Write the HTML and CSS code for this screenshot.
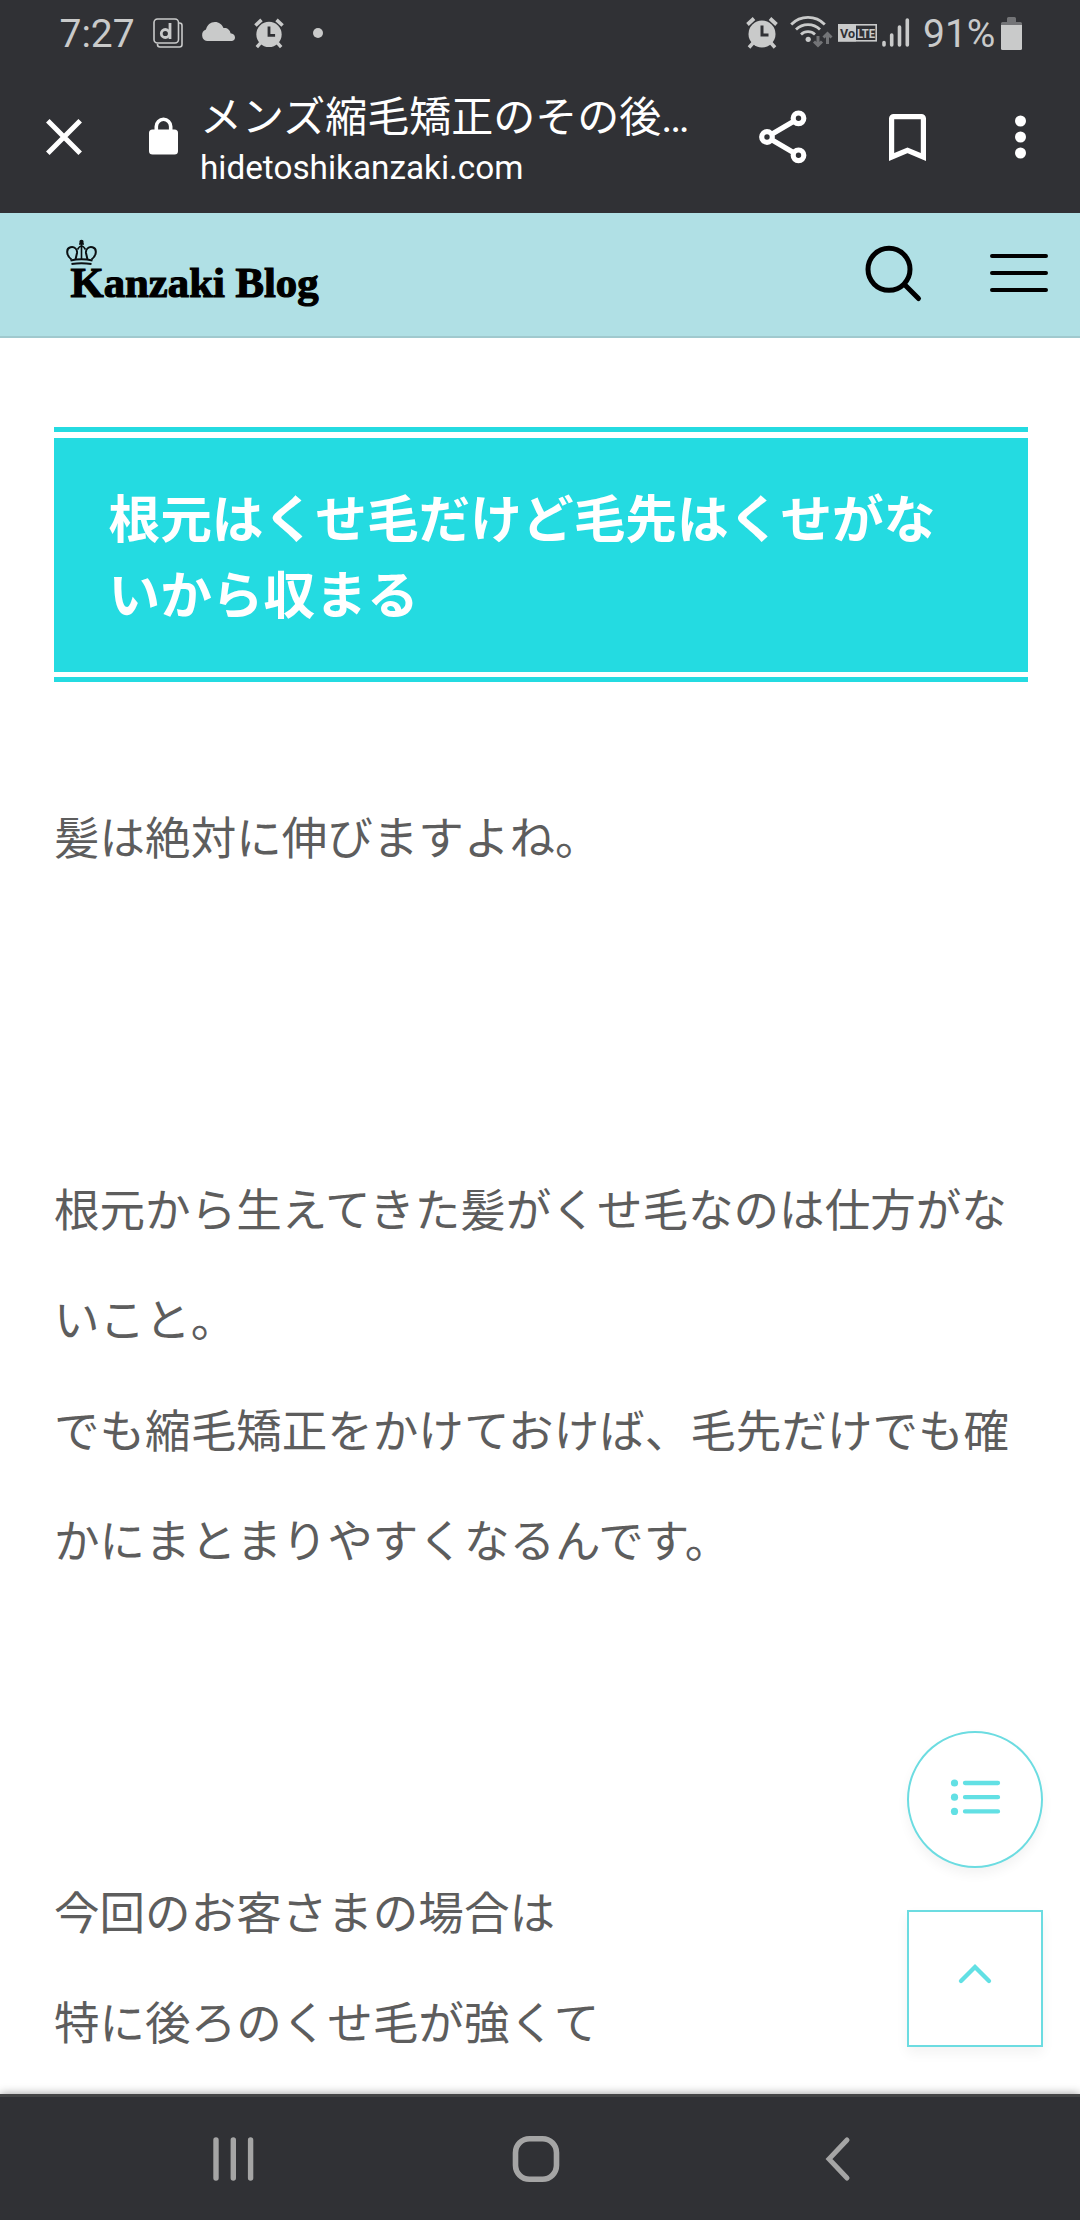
FILE: index.html
```html
<!DOCTYPE html>
<html lang="ja">
<head>
  <meta charset="UTF-8">
  <meta name="viewport" content="width=device-width, initial-scale=1.0">
  <title>Kanzaki Blog</title>
  <link rel="stylesheet" href="styles.css">
</head>
<body>
  <div class="screen">
    <div class="status-bar">
      <div class="status-left">
        <span class="status-text">7:27</span>
        <svg class="icon-app" width="30" height="30" viewBox="0 0 30 30" fill="none" stroke="#c9caca" stroke-width="1.6">
          <rect x="1" y="1" width="24.5" height="24" rx="3.5"/>
          <path d="M26 5h.5a2.500 2.500 0 0 1 2.500 2.500v19a2.500 2.500 0 0 1-2.500 2.500H7a2.500 2.500 0 0 1-2.500-2.500V26"/>
          <circle cx="12.300" cy="15.500" r="4" stroke-width="2.800"/>
          <path d="M17 5v16" stroke-width="2.800"/>
        </svg>
        <svg class="icon-cloud" width="34" height="19" viewBox="0 0 34 19" fill="#c9caca">
          <path d="M6 19a6 6 0 0 1-1-11.500C6 3 9.500 0 14 0c4 0 7 2.500 8.500 6 3.500-.5 6.500 1.500 7 5.200 2.500.2 4.500 1.800 4.500 4.300 0 2-1.500 3.500-3.500 3.500z"/>
        </svg>
        <svg class="icon-alarm-left" width="30" height="31" viewBox="0 0 32 32">
          <use href="#alarm"/>
        </svg>
        <span class="status-dot"></span>
      </div>
      <div class="status-right">
        <svg width="32" height="32" viewBox="0 0 32 32">
          <g id="alarm" fill="none" stroke="#c9caca" stroke-linecap="butt">
            <circle cx="16" cy="17" r="13.500" fill="#c9caca" stroke="none"/>
            <path d="M1.500 7.500L8 1.500M30.500 7.500L24 1.500" stroke-width="3.800"/>
            <path d="M7 26l-4 4.500M25 26l4 4.500" stroke-width="3.500"/>
            <path d="M16 8.500v9.500h6.500" stroke="#303135" stroke-width="3"/>
          </g>
        </svg>
        <svg class="icon-wifi" width="43" height="33" viewBox="0 0 43 33" fill="none" stroke="#c9caca" stroke-width="2.800">
          <path d="M1.200 9.500a23.500 23.500 0 0 1 33.600 0M6 14.500a17 17 0 0 1 24 0M11 19.500a10 10 0 0 1 14 0"/>
          <circle cx="18.200" cy="24.300" r="2.600" fill="#c9caca" stroke="none"/>
          <path d="M28 21v9M24 26.500l4 4 4-4M37.500 29V19M33.500 22.500l4-4 4 4" stroke="#737477" stroke-width="3"/>
        </svg>
        <svg class="icon-volte" width="39" height="18" viewBox="0 0 39 18">
          <rect x=".8" y=".8" width="37.400" height="16" fill="none" stroke="#c9caca" stroke-width="1.600"/>
          <rect width="18" height="17.500" fill="#c9caca"/>
          <text x="2" y="13.500" class="volte" fill="#303135" textLength="15" lengthAdjust="spacingAndGlyphs">Vo</text>
          <text x="19" y="13.500" class="volte" fill="#c9caca" textLength="18" lengthAdjust="spacingAndGlyphs">LTE</text>
        </svg>
        <svg class="icon-signal" width="28" height="31" viewBox="0 0 28 31" stroke="#c9caca" stroke-width="3.600" stroke-linecap="round">
          <path d="M2 25.500V28M9.700 18v10M17.500 10v18M25.300 3v25"/>
        </svg>
        <span class="status-text percent">91%</span>
        <svg class="icon-battery" width="21" height="33" viewBox="0 0 21 33">
          <path d="M6 5V1.500A1.500 1.500 0 0 1 7.500 0h6A1.500 1.500 0 0 1 15 1.500V5h4.500A1.500 1.500 0 0 1 21 6.500V8H0V6.500A1.500 1.500 0 0 1 1.500 5z" fill="#737477"/>
          <path d="M0 8h21v23.500a1.500 1.500 0 0 1-1.500 1.500h-18A1.500 1.500 0 0 1 0 31.500z" fill="#c9caca"/>
        </svg>
      </div>
    </div>

    <div class="tab-bar">
      <svg class="icon-close" width="36" height="36" viewBox="0 0 36 36" stroke="#fff" stroke-width="5">
        <path d="M1.800 1.800l32.400 32.400M34.200 1.800L1.800 34.200"/>
      </svg>
      <svg class="icon-lock" width="29" height="38" viewBox="0 0 29 38">
        <path d="M7.300 15V9.500a7.200 7.200 0 0 1 14.400 0V15" fill="none" stroke="#fff" stroke-width="3.600"/>
        <rect y="12.500" width="29" height="25" rx="3.500" fill="#fff"/>
      </svg>
      <div class="tab-info">
        <div class="tab-title">メンズ縮毛矯正のその後<span class="dots">…</span></div>
        <div class="tab-url">hidetoshikanzaki.com</div>
      </div>
      <svg class="icon-share" width="48" height="54" viewBox="0 0 48 54" fill="none" stroke="#fff" stroke-width="5.200">
        <path d="M8 27L39.500 8.500M8 27l31.500 18.500"/>
        <g fill="#303135">
          <circle cx="8" cy="27" r="5.300"/>
          <circle cx="39.500" cy="8.300" r="5.300"/>
          <circle cx="39.500" cy="45.300" r="5.300"/>
        </g>
      </svg>
      <svg class="icon-bookmark" width="37" height="47" viewBox="0 0 37 47" fill="none" stroke="#fff" stroke-width="5.200">
        <path d="M2.600 43V4.600a2 2 0 0 1 2-2h27.800a2 2 0 0 1 2 2V43L18.500 36.300z"/>
      </svg>
      <svg class="icon-more" width="11" height="44" viewBox="0 0 11 44" fill="#fff">
        <circle cx="5.500" cy="6" r="5.500"/>
        <circle cx="5.500" cy="22" r="5.500"/>
        <circle cx="5.500" cy="38" r="5.500"/>
      </svg>
    </div>

    <header class="site-header">
      <svg class="logo" width="260" height="76" viewBox="0 0 260 76">
        <g fill="none" stroke="#0b1012" stroke-width="2">
          <path d="M6.500 19.500C1.500 16 .5 8.500 5.500 7.300c4-1 7 2 6.500 5.700l-1.500 6.500M26.500 19.500c5-3.500 6-11 1-12.200-4-1-7 2-6.500 5.700l1.500 6.500"/>
          <path d="M16.500 1v18.500M12.500 9.500q2-3.500 4-3.500t4 3.500M14 4h5" stroke-width="1.600"/>
          <path d="M5.500 20.500q11-2.500 22 0M6.500 24q10-1.500 20 0"/>
          <circle cx="16.500" cy="2" r="1.200" fill="#0b1012"/>
        </g>
        <text class="logo-text" x="5.500" y="57" textLength="248" lengthAdjust="spacingAndGlyphs">Kanzaki Blog</text>
      </svg>
      <svg class="icon-search" width="56" height="58" viewBox="0 0 56 58" fill="none" stroke="#000" stroke-width="5" stroke-linecap="round">
        <circle cx="24" cy="24.300" r="21"/>
        <path d="M39.500 39.500l14 14"/>
      </svg>
      <svg class="icon-menu" width="58" height="40" viewBox="0 0 58 40" stroke="#000" stroke-width="4" stroke-linecap="round">
        <path d="M2 3h54M2 20h54M2 37h54"/>
      </svg>
    </header>

    <main class="article">
      <h2 class="heading"><span>根元はくせ毛だけど毛先はくせがないから収まる</span></h2>
      <p>髪は絶対に伸びますよね。</p>
      <p>根元から生えてきた髪がくせ毛なのは仕方がないこと。<br>でも縮毛矯正をかけておけば、毛先だけでも確かにまとまりやすくなるんです。</p>
      <p>今回のお客さまの場合は<br>特に後ろのくせ毛が強くて</p>
    </main>

    <div class="float-buttons">
      <a class="float-btn round">
        <svg width="50" height="36" viewBox="0 0 50 36" stroke="#62e0e4" stroke-width="4.300" stroke-linecap="round">
          <path d="M15 4h33M15 18.200h33M15 32.400h33"/>
          <g fill="#62e0e4" stroke="none">
            <circle cx="4.500" cy="4" r="3.600"/>
            <circle cx="4.500" cy="18.200" r="3.600"/>
            <circle cx="4.500" cy="32.400" r="3.600"/>
          </g>
        </svg>
      </a>
      <a class="float-btn">
        <svg class="icon-up" width="34" height="20" viewBox="0 0 34 20" fill="none" stroke="#62e0e4" stroke-width="4.300" stroke-linecap="round">
          <path d="M3 17L17 3l14 14"/>
        </svg>
      </a>
    </div>

    <div class="nav-bar">
      <svg class="icon-recents" width="41" height="44" viewBox="0 0 41 44" stroke="#a5a5a5" stroke-width="5.400" stroke-linecap="round">
        <path d="M3 3v38M20.300 3v38M37.600 3v38"/>
      </svg>
      <svg class="icon-home" width="48" height="48" viewBox="0 0 48 48" fill="none" stroke="#a5a5a5" stroke-width="5.600">
        <rect x="3.500" y="3.700" width="41" height="40.600" rx="14"/>
      </svg>
      <svg class="icon-back" width="26" height="44" viewBox="0 0 26 44" fill="none" stroke="#a5a5a5" stroke-width="5" stroke-linecap="round">
        <path d="M22 3L4 22l18 19"/>
      </svg>
    </div>
  </div>
</body>
</html>
```

FILE: styles.css
```css
*{
  margin: 0;
  padding: 0;
  box-sizing: border-box;
}

body{
  background-color: #fff;
  font-family: Roboto, "Noto Sans CJK JP", sans-serif;
}

svg{
  display: block;
  flex: none;
  overflow: visible;
}

.screen{
  position: relative;
  display: flex;
  flex-direction: column;
  width: 1080px;
  height: 2220px;
  overflow: hidden;
}

/* status bar */
.status-bar{
  display: flex;
  justify-content: space-between;
  flex: none;
  height: 66px;
  padding: 0 58.500px 0 59.500px;
  background-color: #303135;
}

.status-left,
.status-right{
  display: flex;
  align-items: center;
  height: 66px;
}

.status-text{
  width: 76px;
  font-size: 39px;
  line-height: 66px;
  padding-top: 2px;
  color: #c9caca;
  white-space: nowrap;
}

.icon-app{
  margin-left: 17px;
}

.icon-cloud{
  margin: -3px 0 0 18px;
}

.icon-alarm-left{
  margin-left: 19.500px;
}

.status-dot{
  width: 10px;
  height: 10px;
  margin: -1px 0 0 28.500px;
  border-radius: 50%;
  background-color: #c9caca;
}

.icon-wifi{
  margin: -3px 0 0 12px;
}

.icon-volte{
  margin-left: 5px;
}

.volte{
  font-family: Roboto, sans-serif;
  font-size: 13.500px;
  font-weight: 700;
}

.icon-signal{
  margin: -2px 0 0 5px;
}

.percent{
  margin-left: 13px;
}

.icon-battery{
  margin-left: 1.500px;
}

/* browser tab bar */
.tab-bar{
  display: flex;
  align-items: center;
  flex: none;
  height: 147px;
  padding-left: 45.500px;
  background-color: #303135;
}

.icon-close{
  margin-top: -5px;
}

.icon-lock{
  margin: -7px 0 0 67.500px;
}

.tab-info{
  width: 492px;
  margin-left: 22px;
  color: #fff;
}

.tab-title{
  height: 54px;
  font-size: 42px;
  line-height: 54px;
  white-space: nowrap;
}

.dots{
  letter-spacing: 1px;
}

.tab-url{
  height: 44px;
  font-size: 33.300px;
  line-height: 45px;
}

.icon-share{
  margin: -5px 0 0 67px;
}

.icon-bookmark{
  margin: -5px 0 0 82px;
}

.icon-more{
  margin: -5px 0 0 89px;
}

/* site header */
.site-header{
  display: flex;
  flex: none;
  height: 125px;
  padding-left: 65px;
  background-color: #b0e0e5;
  border-bottom: 2px solid #a0c9ce;
}

.logo{
  margin-top: 27px;
}

.logo-text{
  font-family: "Liberation Serif", serif;
  font-size: 43px;
  font-weight: 700;
  fill: #000;
  stroke: #000;
  stroke-width: 1.200px;
}

.icon-search{
  margin: 32px 0 0 540px;
}

.icon-menu{
  margin: 40px 0 0 69px;
}

/* article */
.article{
  flex: 1;
  min-height: 0;
  overflow: hidden;
  padding: 89px 52px 0 54px;
  font-family: "Noto Sans CJK JP", sans-serif;
}

.heading{
  width: 974px;
  margin-bottom: 98px;
  padding: 6px 0 5px;
  border-top: 5px solid #24dbe1;
  border-bottom: 5px solid #24dbe1;
}

.heading span{
  display: block;
  height: 234px;
  padding: 40px 55px 0 54.500px;
  background-color: #24dbe1;
  color: #fff;
  font-size: 51.700px;
  line-height: 76px;
}

.article p{
  margin-bottom: 262px;
  font-size: 45.550px;
  line-height: 110.200px;
  color: #5d5d5d;
}

/* floating buttons */
.float-buttons{
  position: absolute;
  right: 37px;
  bottom: 173px;
  display: flex;
  flex-direction: column;
  gap: 42px;
}

.float-btn{
  display: flex;
  align-items: center;
  justify-content: center;
  width: 136px;
  height: 137px;
  padding-bottom: 5px;
  background-color: #fff;
  border: 2px solid #6cdce1;
  box-shadow: 0 6px 12px rgba(0, 0, 0, .05);
}

.float-btn.round{
  border-radius: 50%;
}

.icon-up{
  margin-top: -5px;
}

/* android navigation */
.nav-bar{
  position: relative;
  display: flex;
  flex: none;
  height: 126px;
  padding: 40px 0 0 213px;
  background-color: #303135;
  border-top: 3px solid #444546;
  box-shadow: 0 0 9px rgba(0, 0, 0, .4);
}

.icon-home{
  margin: -2px 0 0 258px;
}

.icon-back{
  margin-left: 265px;
}
```
